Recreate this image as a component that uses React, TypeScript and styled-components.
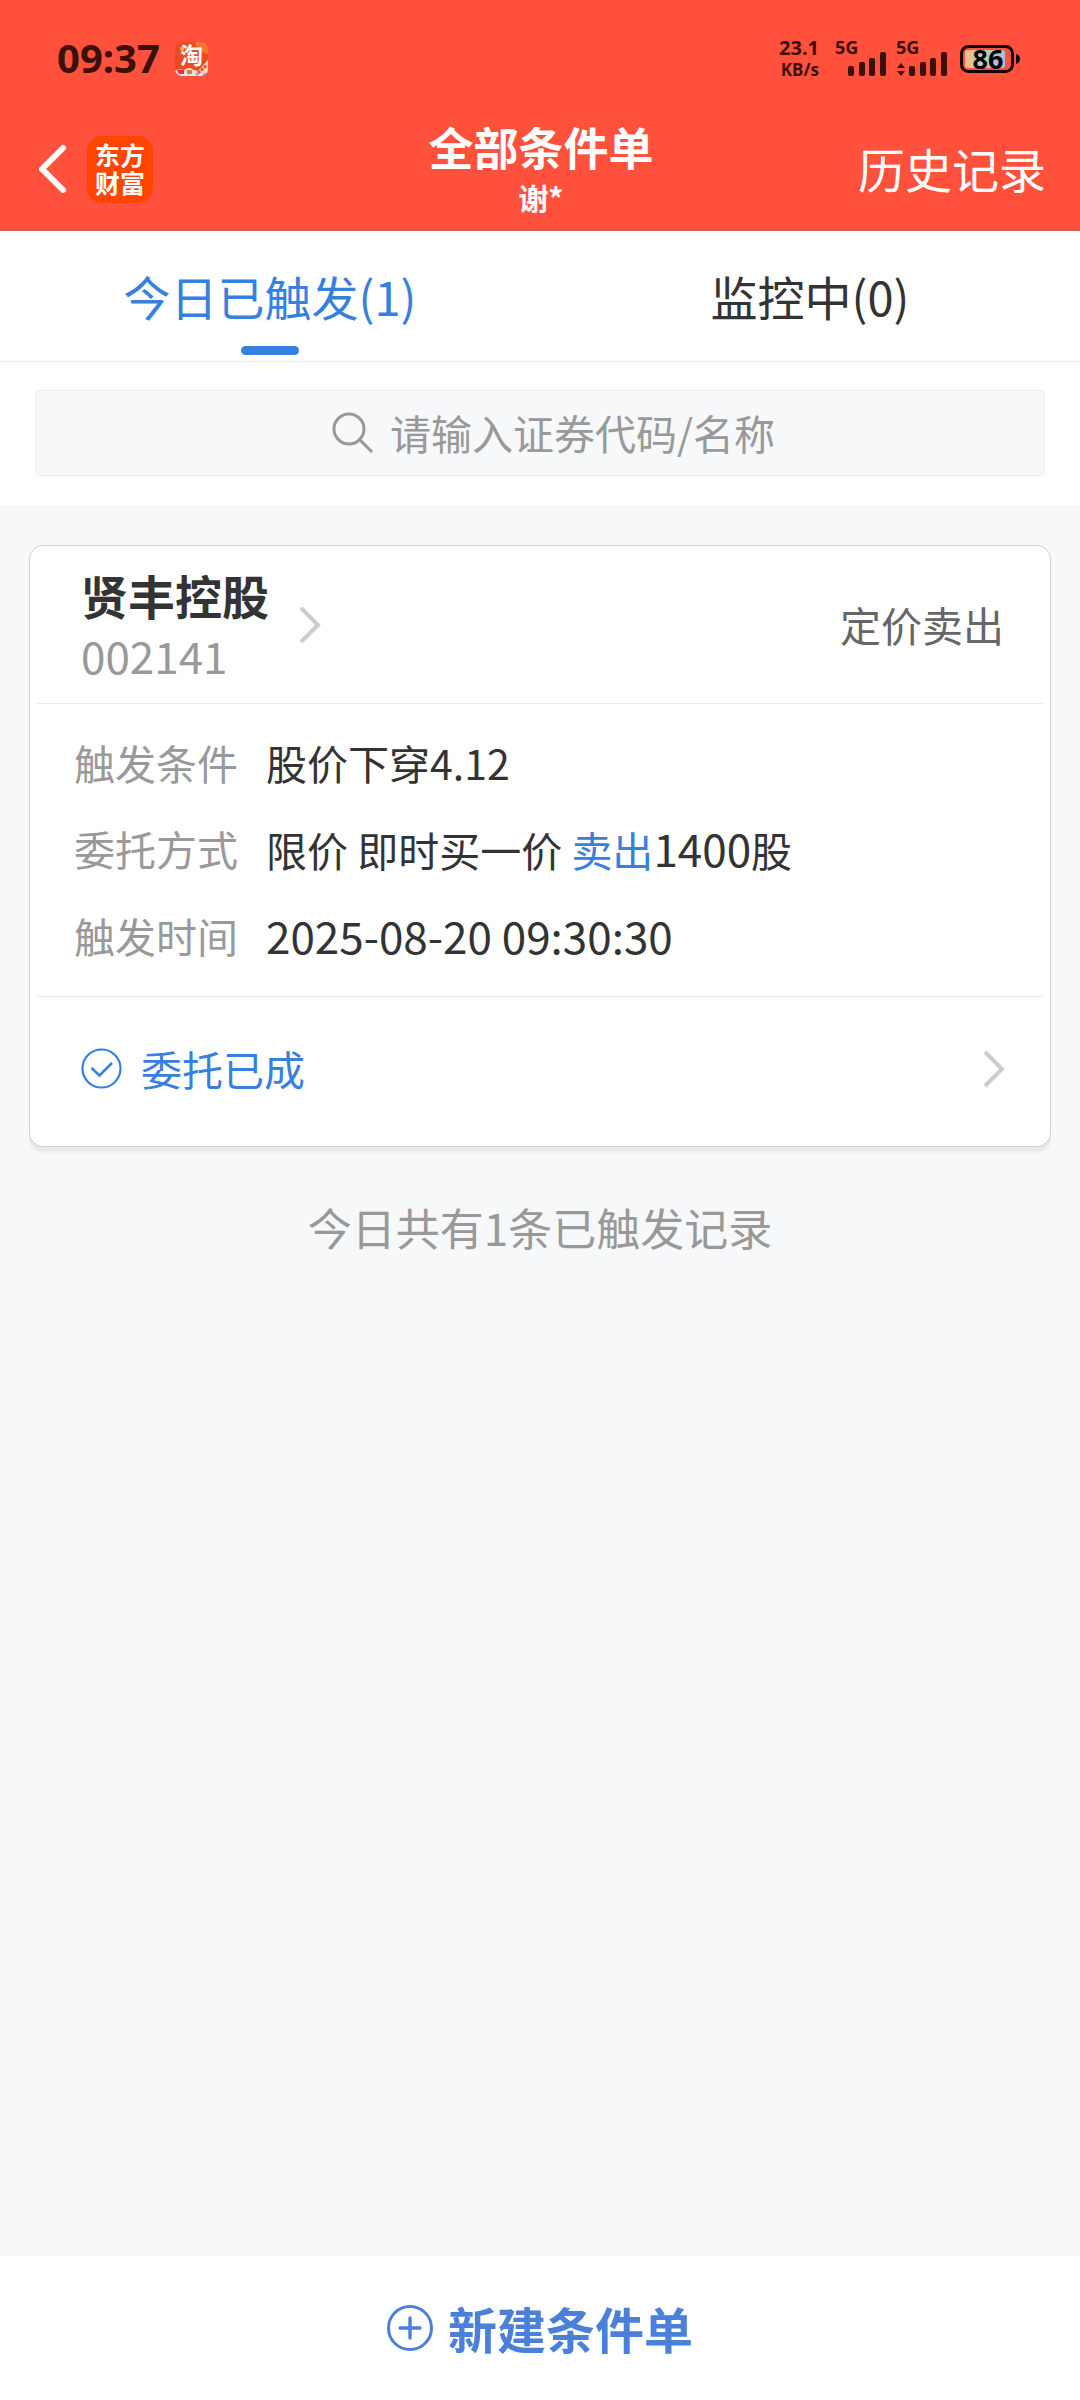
import React from "react";
import styled, { createGlobalStyle } from "styled-components";

const color = {
  brand: "#ff513b",
  blue: "#3780df",
  ink: "#333333",
  mid: "#666666",
  soft: "#999999",
  line: "#ebecee",
  page: "#f7f8fa",
  status: "#3b0f0a",
};

const GlobalStyle = createGlobalStyle`
  * { box-sizing: border-box; }
  body {
    margin: 0;
    background: ${color.page};
    color: ${color.ink};
    font-family: "Noto Sans CJK SC", "Noto Sans", sans-serif;
  }
  button, input { font: inherit; color: inherit; }
  button { border: 0; padding: 0; background: none; cursor: pointer; }
  a { color: inherit; text-decoration: none; }
  svg { display: block; flex: none; overflow: visible; }
`;

const Screen = styled.div`
  min-height: 100vh;
  display: flex;
  flex-direction: column;
`;

/* Header */

const Header = styled.header`
  background: ${color.brand};
  color: #fff;
  border-bottom: 1px solid #c8604f;
`;

const StatusBar = styled.div`
  display: flex;
  align-items: center;
  justify-content: space-between;
  height: 112px;
  padding: 6px 59px 0 57px;
  color: ${color.status};
  font-family: "Noto Sans", "Noto Sans CJK SC", sans-serif;
  font-weight: 700;
`;

const StatusGroup = styled.div<{ $gap: number }>`
  display: flex;
  align-items: center;
  gap: ${(p) => p.$gap}px;
`;

const Clock = styled.time`
  padding-bottom: 2px;
  font-size: 40px;
  line-height: 48px;
`;

const NetSpeed = styled.div`
  display: grid;
  font-size: 20px;
  line-height: 22px;
  text-align: right;
`;

const SpeedUnit = styled.span`
  font-size: 17px;
`;

const NavBar = styled.nav`
  display: grid;
  grid-template-columns: 1fr auto 1fr;
  align-items: center;
  height: 118px;
  padding: 0 34px 4px 36px;
`;

const NavStart = styled.div`
  display: flex;
  align-items: center;
  gap: 19px;
`;

const BrandLogo = styled.a`
  width: 66px;
  height: 67px;
  padding: 4px 8px 0;
  border-radius: 15px;
  background: #ff4500;
  font-size: 25px;
  line-height: 28px;
  font-weight: 700;
  word-break: break-all;
`;

const TitleBlock = styled.div`
  text-align: center;
`;

const Title = styled.h1`
  margin: 0;
  font-size: 45px;
  line-height: 56px;
  font-weight: 700;
`;

const Account = styled.p`
  margin: 0;
  font-size: 30px;
  line-height: 44px;
  font-weight: 700;
`;

const HistoryLink = styled.a`
  justify-self: end;
  padding-bottom: 2px;
  font-size: 47px;
  line-height: 60px;
`;

/* Tabs and search */

const Tabs = styled.div`
  display: flex;
  background: #fff;
  border-bottom: 1px solid ${color.line};
`;

const Tab = styled.button<{ $active?: boolean }>`
  position: relative;
  flex: 1;
  height: 130px;
  font-size: 47px;
  line-height: 60px;
  color: ${(p) => (p.$active ? color.blue : color.ink)};

  &::after {
    content: "";
    display: ${(p) => (p.$active ? "block" : "none")};
    position: absolute;
    left: 50%;
    bottom: 6px;
    width: 58px;
    height: 9px;
    margin-left: -29px;
    border-radius: 5px;
    background: ${color.blue};
  }
`;

const SearchSection = styled.div`
  padding: 28px 35px 29px;
  background: #fff;
`;

const SearchBox = styled.label`
  display: flex;
  align-items: center;
  justify-content: center;
  gap: 16px;
  height: 86px;
  padding-left: 30px;
  border: 1px solid ${color.line};
  border-radius: 6px;
  background: ${color.page};
  color: ${color.soft};
`;

const SearchInput = styled.input`
  width: 388px;
  height: 60px;
  padding: 0 0 2px;
  border: 0;
  outline: 0;
  background: transparent;
  font-size: 41px;

  &::placeholder {
    color: ${color.soft};
    opacity: 1;
  }
`;

/* Order list */

const Content = styled.main`
  flex: 1;
  padding: 40px 29px;
`;

const Card = styled.article`
  padding: 0 7px;
  border: 1px solid #cfd0d2;
  border-radius: 14px;
  background: #fff;
  box-shadow: 0 4px 0 #e8e9eb, 0 7px 0 #f1f2f4;
`;

const CardHead = styled.header`
  display: flex;
  align-items: center;
  justify-content: space-between;
  height: 158px;
  padding: 0 39px 0 44px;
  border-bottom: 1px solid ${color.line};
`;

const StockLink = styled.a`
  display: flex;
  align-items: center;
  gap: 30px;
  color: #cccccc;
`;

const StockName = styled.h2`
  margin: 0;
  color: ${color.ink};
  font-size: 47px;
  line-height: 60px;
  font-weight: 700;
`;

const StockCode = styled.p`
  margin: 0;
  color: ${color.soft};
  font-size: 44px;
  line-height: 60px;
`;

const OrderKind = styled.span`
  padding-bottom: 2px;
  color: ${color.mid};
  font-size: 41px;
  line-height: 50px;
`;

const Details = styled.dl`
  display: grid;
  grid-template-columns: auto 1fr;
  column-gap: 28px;
  row-gap: 36px;
  margin: 0;
  padding: 33px 37px 35px;
  border-bottom: 1px solid ${color.line};
  font-size: 41px;
  line-height: 50px;
`;

const Term = styled.dt`
  color: ${color.soft};
`;

const Value = styled.dd`
  margin: 0;
`;

const Figure = styled.span`
  font-size: 44px;
`;

const Side = styled.span`
  color: ${color.blue};
`;

const ResultButton = styled.button`
  display: flex;
  align-items: center;
  justify-content: space-between;
  width: 100%;
  height: 149px;
  padding: 0 38px 6px 44px;
  color: #cccccc;
`;

const ResultLabel = styled.span`
  display: flex;
  align-items: center;
  gap: 19px;
  color: ${color.blue};
  font-size: 41px;
  line-height: 50px;
`;

const ResultText = styled.span`
  padding-bottom: 2px;
`;

const Summary = styled.p`
  margin: 50px 0 0;
  color: ${color.soft};
  font-size: 44px;
  line-height: 60px;
  text-align: center;
`;

/* Bottom action */

const BottomBar = styled.footer`
  position: sticky;
  bottom: 0;
  background: #fff;
`;

const CreateButton = styled.button`
  display: flex;
  align-items: center;
  justify-content: center;
  gap: 15px;
  width: 100%;
  height: 144px;
  color: #4a80da;
  font-size: 49px;
  line-height: 60px;
  font-weight: 700;
`;

function TaobaoIcon() {
  return (
    <svg width="33" height="34" viewBox="0 0 33 34" role="img" aria-label="淘宝">
      <defs>
        <clipPath id="taobao-shape">
          <rect width="33" height="34" rx="7" />
        </clipPath>
      </defs>
      <g clipPath="url(#taobao-shape)">
        <rect width="33" height="34" fill="#ec4a24" />
        <path d="M20 0h13v12C27 11 22 7 20 0z" fill="#f5762f" />
        <path d="M0 29q4-3 9-1 5-4 10 0l4 1 10-11v16H0z" fill="#f3ddd2" />
        <path d="M2 28h7v4H4z" fill="#e02e4e" />
        <path d="M12 28h5v4h-5z" fill="#b98a55" />
        <path d="M23 31l9-8" stroke="#e5572e" strokeWidth="3" strokeDasharray="3 1" />
        <path d="M21 33l3-2M28 33l3-1" stroke="#6fa3cf" strokeWidth="2" />
      </g>
      <text x="5" y="22" fontSize="23" fontWeight="700" fill="#fff" fontFamily="Noto Sans CJK SC">
        淘
      </text>
      <circle cx="7" cy="7" r="2" fill="#ffc42e" />
    </svg>
  );
}

function Signal({ data }: { data?: boolean }) {
  return (
    <svg width="53" height="36" viewBox="0 0 53 36" role="img" aria-label="5G" fill={color.status}>
      <text x="0" y="13" fontSize="18" fontWeight="700" fontFamily="Noto Sans">
        5G
      </text>
      {data && <path d="M1 27l4-5 4 5zM1 30l4 5 4-5z" />}
      <rect x="13" y="25" width="6" height="10" rx="2" />
      <rect x="24" y="21" width="6" height="14" rx="2" />
      <rect x="34" y="17" width="6" height="18" rx="2" />
      <rect x="45" y="11" width="6" height="24" rx="2" />
    </svg>
  );
}

function Battery() {
  return (
    <svg width="61" height="28" viewBox="0 0 61 28" role="img" aria-label="86%">
      <defs>
        <linearGradient id="charge">
          <stop offset="0" stopColor="#f2bd85" />
          <stop offset="0.4" stopColor="#b9cfb4" />
          <stop offset="1" stopColor="#a9bede" />
        </linearGradient>
      </defs>
      <rect x="1.5" y="1.5" width="51" height="25" rx="7" fill="none" stroke="#120403" strokeWidth="3" />
      <rect x="5" y="5" width="40" height="18" rx="3" fill="url(#charge)" />
      <path d="M56 9q4 1 4 5t-4 5z" fill="#120403" />
      <text x="28" y="24" textAnchor="middle" fontSize="27" fontWeight="700" fontFamily="Noto Sans" fill="#000">
        86
      </text>
    </svg>
  );
}

function BackIcon() {
  return (
    <svg width="32" height="52" viewBox="0 0 32 52" fill="none" stroke="#fff" strokeWidth="6" strokeLinecap="round" strokeLinejoin="round">
      <path d="M27 5L6 26l21 21" />
    </svg>
  );
}

function SearchIcon() {
  return (
    <svg width="42" height="42" viewBox="0 0 42 42" fill="none" stroke="currentColor" strokeWidth="3">
      <circle cx="17" cy="17" r="15" />
      <path d="M27 27l13 13" />
    </svg>
  );
}

function ChevronIcon() {
  return (
    <svg width="22" height="38" viewBox="0 0 22 38" fill="none" stroke="currentColor" strokeWidth="4">
      <path d="M2 2l17 17L2 36" />
    </svg>
  );
}

function CheckIcon() {
  return (
    <svg width="41" height="41" viewBox="0 0 41 41" fill="none" stroke="currentColor">
      <circle cx="20.5" cy="20.5" r="19" strokeWidth="2.2" />
      <path d="M10.5 20l8 7.5L31 15" strokeWidth="2.6" />
    </svg>
  );
}

function PlusIcon() {
  return (
    <svg width="46" height="46" viewBox="0 0 46 46" fill="none" stroke="currentColor" strokeWidth="3" strokeLinecap="round">
      <circle cx="23" cy="23" r="21.5" />
      <path d="M23 13v20M13 23h20" strokeWidth="3.4" />
    </svg>
  );
}

export default function App() {
  return (
    <Screen>
      <GlobalStyle />
      <Header>
        <StatusBar>
          <StatusGroup $gap={15}>
            <Clock>09:37</Clock>
            <TaobaoIcon />
          </StatusGroup>
          <StatusGroup $gap={8}>
            <StatusGroup $gap={16}>
              <NetSpeed>
                <span>23.1</span>
                <SpeedUnit>KB/s</SpeedUnit>
              </NetSpeed>
              <Signal />
            </StatusGroup>
            <StatusGroup $gap={11}>
              <Signal data />
              <Battery />
            </StatusGroup>
          </StatusGroup>
        </StatusBar>
        <NavBar>
          <NavStart>
            <button type="button" aria-label="返回">
              <BackIcon />
            </button>
            <BrandLogo href="#home">东方财富</BrandLogo>
          </NavStart>
          <TitleBlock>
            <Title>全部条件单</Title>
            <Account>谢*</Account>
          </TitleBlock>
          <HistoryLink href="#history">历史记录</HistoryLink>
        </NavBar>
      </Header>

      <Tabs role="tablist">
        <Tab type="button" role="tab" aria-selected="true" $active>
          今日已触发(1)
        </Tab>
        <Tab type="button" role="tab" aria-selected="false">
          监控中(0)
        </Tab>
      </Tabs>

      <SearchSection>
        <SearchBox>
          <SearchIcon />
          <SearchInput type="text" aria-label="搜索证券" placeholder="请输入证券代码/名称" />
        </SearchBox>
      </SearchSection>

      <Content>
        <Card>
          <CardHead>
            <StockLink href="#002141">
              <div>
                <StockName>贤丰控股</StockName>
                <StockCode>002141</StockCode>
              </div>
              <ChevronIcon />
            </StockLink>
            <OrderKind>定价卖出</OrderKind>
          </CardHead>
          <Details>
            <Term>触发条件</Term>
            <Value>股价下穿4.12</Value>
            <Term>委托方式</Term>
            <Value>
              限价 即时买一价 <Side>卖出</Side>
              <Figure>1400</Figure>股
            </Value>
            <Term>触发时间</Term>
            <Value>
              <Figure>2025-08-20 09:30:30</Figure>
            </Value>
          </Details>
          <ResultButton type="button">
            <ResultLabel>
              <CheckIcon />
              <ResultText>委托已成</ResultText>
            </ResultLabel>
            <ChevronIcon />
          </ResultButton>
        </Card>
        <Summary>今日共有1条已触发记录</Summary>
      </Content>

      <BottomBar>
        <CreateButton type="button">
          <PlusIcon />
          新建条件单
        </CreateButton>
      </BottomBar>
    </Screen>
  );
}
